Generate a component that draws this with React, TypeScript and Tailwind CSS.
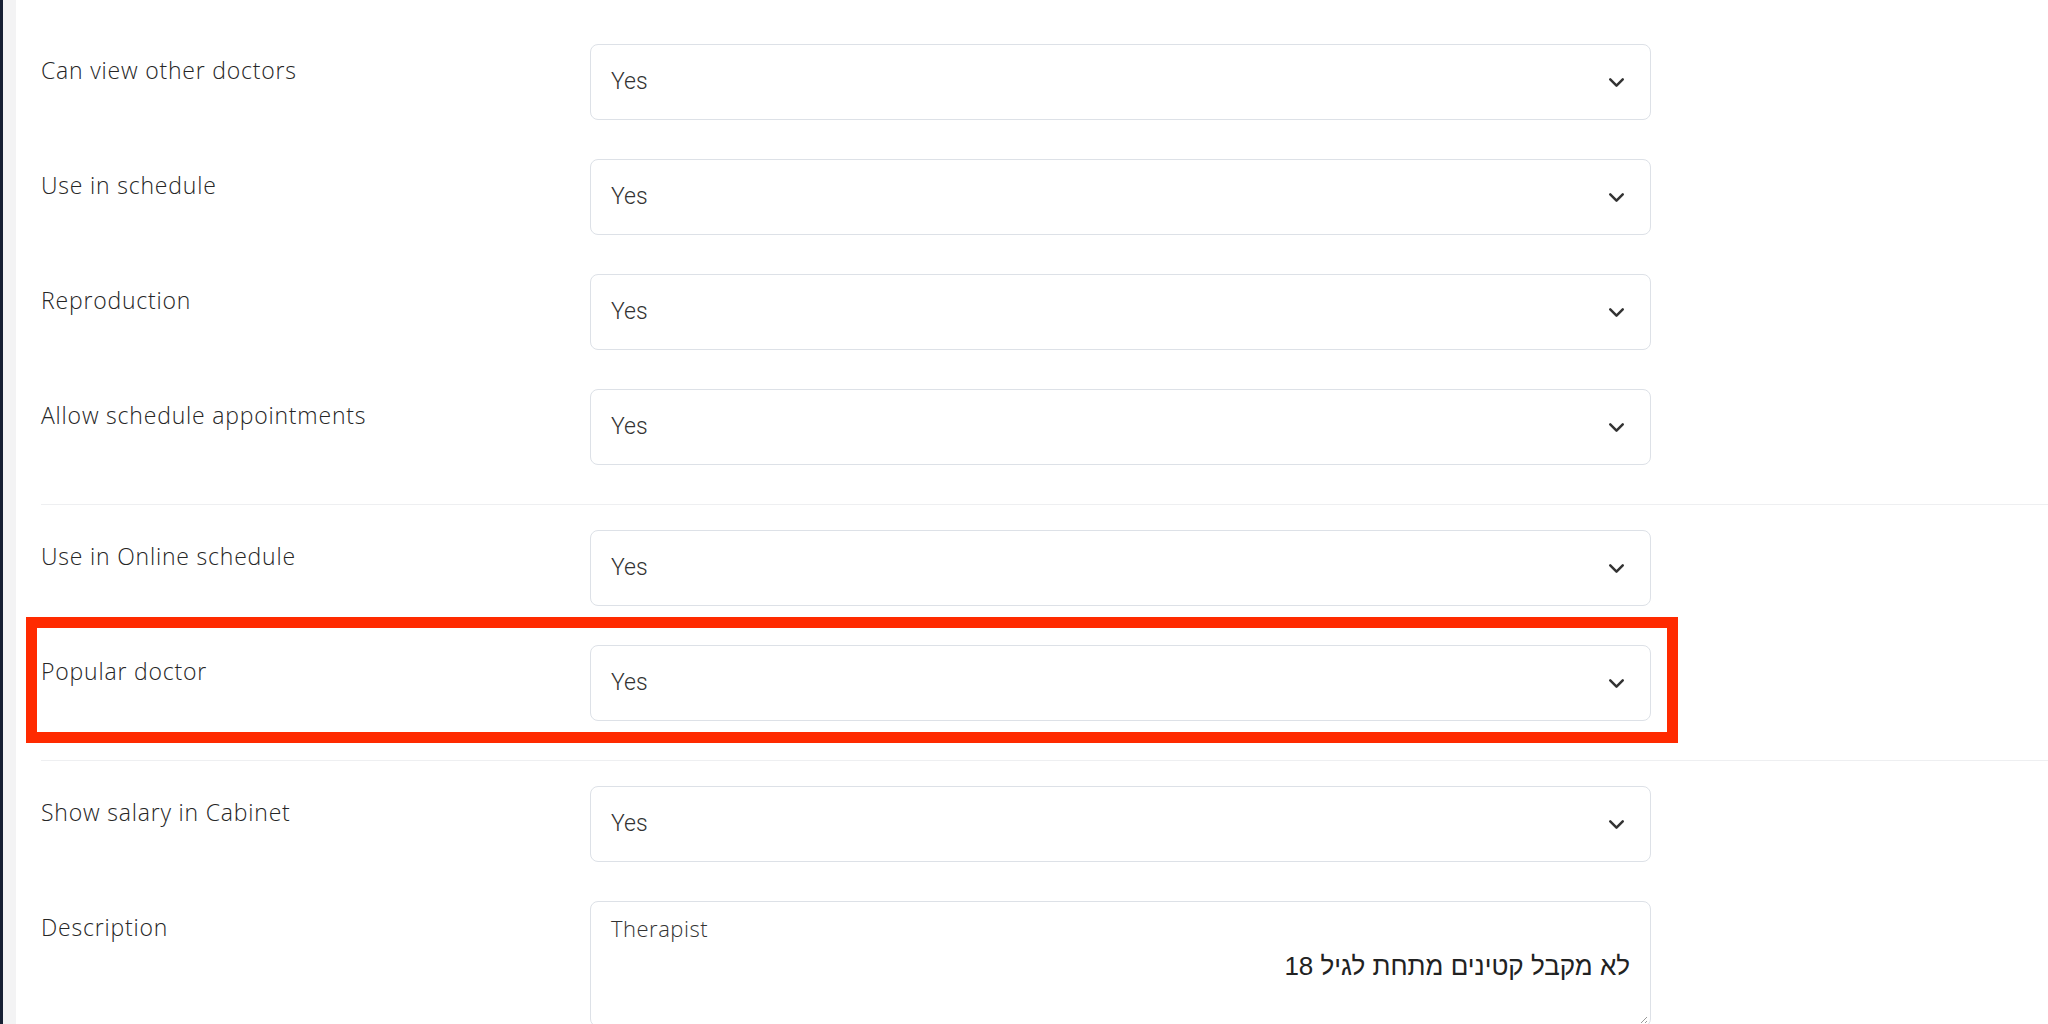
import { ChevronDown } from "lucide-react";

const groups: string[][] = [
  ["Can view other doctors", "Use in schedule", "Reproduction", "Allow schedule appointments"],
  ["Use in Online schedule", "Popular doctor"],
  ["Show salary in Cabinet"],
];

const labelCls =
  "w-[549px] shrink-0 pt-[11px] text-[23px] leading-[30px] tracking-[0.8px] text-[#262626] font-light font-['Open_Sans',sans-serif]";

function SelectRow({ label }: { label: string }) {
  return (
    <div className="flex items-start mb-[39px]">
      <div className={labelCls}>{label}</div>
      <div className="w-[1061px] h-[76px] flex items-center justify-between rounded-[8px] border border-[#dde1e7] bg-white pl-[20px] pr-[21px]">
        <span className="text-[23px] text-[#333] font-light font-['Roboto',sans-serif]">Yes</span>
        <ChevronDown className="w-[25px] h-[25px] text-[#333]" strokeWidth={2.4} />
      </div>
    </div>
  );
}

export default function App() {
  return (
    <div className="relative flex w-[2048px] h-[1024px] overflow-hidden bg-white">
      <div className="w-[3px] shrink-0 bg-[#172033]" />
      <div className="w-[13px] shrink-0 bg-[#f3f3f4]" />
      <main className="flex-1 pl-[25px] pt-[44px]">
        {groups.map((rows, gi) => (
          <div key={gi} className={gi > 0 ? "border-t border-[#eeeff1] pt-[25px]" : ""}>
            {rows.map((r) => (
              <SelectRow key={r} label={r} />
            ))}
          </div>
        ))}
        <div className="flex items-start">
          <div className={labelCls}>Description</div>
          <div className="relative w-[1061px] h-[126px] rounded-[8px] border border-[#dde1e7] bg-white px-[20px] pt-[8px]">
            <p className="text-[22px] leading-[36px] tracking-[0.5px] text-[#333] font-light font-['Open_Sans',sans-serif]">Therapist</p>
            <p dir="rtl" className="text-[26px] leading-[40px] text-[#222] font-['Liberation_Sans','DejaVu_Sans',sans-serif]">
              לא מקבל קטינים מתחת לגיל 18
            </p>
            <svg className="absolute right-[2px] bottom-[2px] w-[10px] h-[10px]" viewBox="0 0 10 10">
              <path d="M9 3 L3 9 M9 7 L7 9" stroke="#999" strokeWidth="1" />
            </svg>
          </div>
        </div>
      </main>
      {/* highlight annotation */}
      <div className="absolute left-[26px] top-[617px] w-[1652px] h-[126px] border-[11px] border-[#ff2a00]" />
    </div>
  );
}
